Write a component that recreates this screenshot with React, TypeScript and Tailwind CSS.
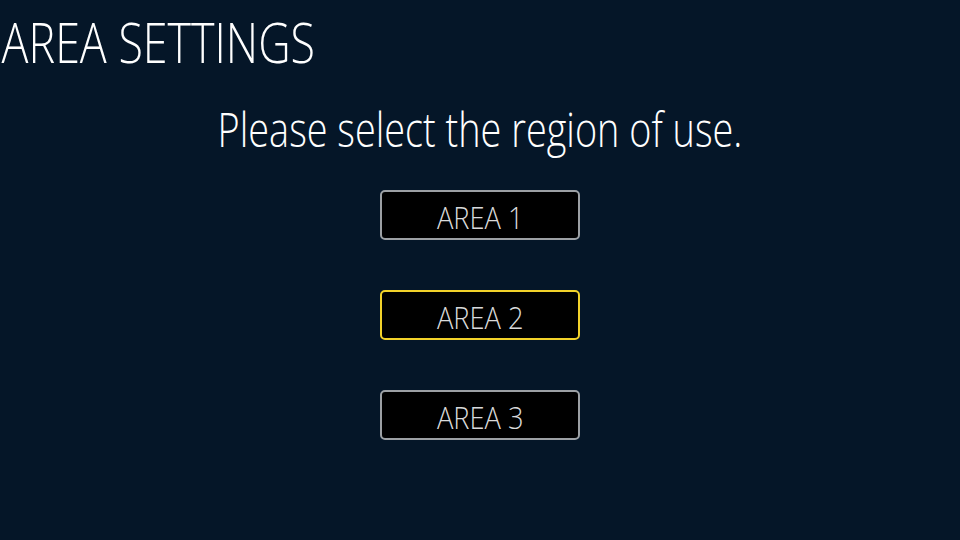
import React, { useState } from 'react';

const areas = ['AREA 1', 'AREA 2', 'AREA 3'];

export default function App() {
  const [selected, setSelected] = useState(1);

  return (
    <div
      className="w-[960px] h-[540px] bg-[#051628] text-white overflow-hidden flex flex-col"
      style={{ fontFamily: '"Open Sans", "Noto Sans", sans-serif' }}
    >
      {/* the reference font is a condensed one, so squeeze Open Sans */}
      <h1 className="text-[56px] font-[350] leading-none pl-[2px] pt-[13px] scale-x-[0.8] origin-left">
        AREA SETTINGS
      </h1>

      <p className="mt-[37px] text-center text-[47px] font-[350] leading-none scale-x-[0.805]">
        Please select the region of use.
      </p>

      <div className="mt-[37px] flex flex-col items-center gap-[50px]">
        {areas.map((area, i) => (
          <button
            key={area}
            onClick={() => setSelected(i)}
            className={`w-[200px] h-[50px] rounded-[5px] border-2 bg-black text-[#d9dadb] text-[31px] font-[350] leading-none pt-[4px] flex items-center justify-center ${
              selected === i ? 'border-[#f2d22a]' : 'border-[#9ca0a4]'
            }`}
          >
            <span className="inline-block scale-x-[0.88]">{area}</span>
          </button>
        ))}
      </div>
    </div>
  );
}
